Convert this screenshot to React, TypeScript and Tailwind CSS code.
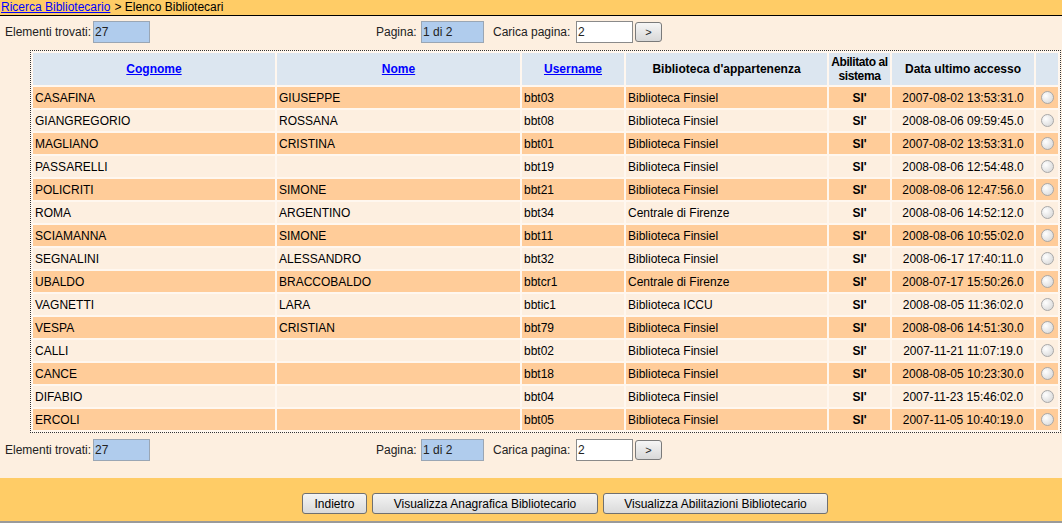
import React from "react";

type Row = [string, string, string, string, string];

const rows: Row[] = [
  ["CASAFINA", "GIUSEPPE", "bbt03", "Biblioteca Finsiel", "2007-08-02 13:53:31.0"],
  ["GIANGREGORIO", "ROSSANA", "bbt08", "Biblioteca Finsiel", "2008-08-06 09:59:45.0"],
  ["MAGLIANO", "CRISTINA", "bbt01", "Biblioteca Finsiel", "2007-08-02 13:53:31.0"],
  ["PASSARELLI", "", "bbt19", "Biblioteca Finsiel", "2008-08-06 12:54:48.0"],
  ["POLICRITI", "SIMONE", "bbt21", "Biblioteca Finsiel", "2008-08-06 12:47:56.0"],
  ["ROMA", "ARGENTINO", "bbt34", "Centrale di Firenze", "2008-08-06 14:52:12.0"],
  ["SCIAMANNA", "SIMONE", "bbt11", "Biblioteca Finsiel", "2008-08-06 10:55:02.0"],
  ["SEGNALINI", "ALESSANDRO", "bbt32", "Biblioteca Finsiel", "2008-06-17 17:40:11.0"],
  ["UBALDO", "BRACCOBALDO", "bbtcr1", "Centrale di Firenze", "2008-07-17 15:50:26.0"],
  ["VAGNETTI", "LARA", "bbtic1", "Biblioteca ICCU", "2008-08-05 11:36:02.0"],
  ["VESPA", "CRISTIAN", "bbt79", "Biblioteca Finsiel", "2008-08-06 14:51:30.0"],
  ["CALLI", "", "bbt02", "Biblioteca Finsiel", "2007-11-21 11:07:19.0"],
  ["CANCE", "", "bbt18", "Biblioteca Finsiel", "2008-08-05 10:23:30.0"],
  ["DIFABIO", "", "bbt04", "Biblioteca Finsiel", "2007-11-23 15:46:02.0"],
  ["ERCOLI", "", "bbt05", "Biblioteca Finsiel", "2007-11-05 10:40:19.0"],
];

function Pager() {
  return (
    <div className="flex h-[22px] items-center text-[12px] text-[#222]">
      <span className="ml-[5px] w-[88px] whitespace-nowrap">Elementi trovati:</span>
      <span className="flex h-[22px] w-[57px] items-center border border-[#9aa6b4] bg-[#b0cced] pl-[1px] text-[12px] text-[#222]">
        27
      </span>
      <span className="w-[226px]" />
      <span className="w-[45px] whitespace-nowrap">Pagina:</span>
      <span className="flex h-[22px] w-[63px] items-center border border-[#9aa6b4] bg-[#b0cced] pl-[1px]">
        1 di 2
      </span>
      <span className="ml-[9px] w-[83px] whitespace-nowrap">Carica pagina:</span>
      <span className="flex h-[22px] w-[57px] items-center border border-[#8a8a8a] bg-white pl-[1px]">
        2
      </span>
      <span className="ml-[2px] flex h-[20px] w-[27px] items-center justify-center rounded-[3px] border border-[#7a7a7a] bg-linear-to-b from-[#f6f6f6] to-[#d8d8d8] text-[11px] text-[#222]">
        &gt;
      </span>
    </div>
  );
}

function Radio() {
  return (
    <span className="mx-auto block h-[13px] w-[13px] rounded-full border border-[#a8a8a8] bg-[radial-gradient(circle_at_35%_35%,#ffffff,#d2d2d2)]" />
  );
}

export default function App() {
  return (
    <div
      className="flex h-[523px] w-[1062px] flex-col overflow-hidden bg-[#fdefe0] text-black"
      style={{ fontFamily: '"Liberation Sans", Arial, sans-serif' }}
    >
      <div className="flex h-[15px] items-center bg-[#ffcc66] pl-[1px] text-[12px] leading-[15px]">
        <a className="text-[#0000ff] underline">Ricerca Bibliotecario</a>
        <span className="ml-[4px]">&gt; Elenco Bibliotecari</span>
      </div>
      <div className="h-[2px] bg-black" />

      <div className="mt-[5px]">
        <Pager />
      </div>

      <div className="ml-[30px] mt-[7px]">
        <table className="w-[1031px] table-fixed border-separate border-spacing-[2px] border border-dotted border-[#333] bg-[#fff7ef] text-[12px]">
          <colgroup>
            <col className="w-[242px]" />
            <col className="w-[243px]" />
            <col className="w-[102px]" />
            <col className="w-[201px]" />
            <col className="w-[61px]" />
            <col className="w-[142px]" />
            <col className="w-[22px]" />
          </colgroup>
          <thead>
            <tr className="h-[32px] bg-[#dce6f0] font-bold leading-[14px]">
              <th className="p-0 text-center">
                <a className="text-[#0000ff] underline">Cognome</a>
              </th>
              <th className="p-0 text-center">
                <a className="text-[#0000ff] underline">Nome</a>
              </th>
              <th className="p-0 text-center">
                <a className="text-[#0000ff] underline">Username</a>
              </th>
              <th className="p-0 text-center">Biblioteca d'appartenenza</th>
              <th className="overflow-visible whitespace-nowrap p-0 text-center tracking-[-0.4px]">
                Abilitato al
                <br />
                sistema
              </th>
              <th className="p-0 text-center">Data ultimo accesso</th>
              <th className="p-0" />
            </tr>
          </thead>
          <tbody>
            {rows.map((r, i) => (
              <tr
                key={i}
                className={`h-[21px] leading-[14px] ${i % 2 === 0 ? "bg-[#ffcc99]" : "bg-[#fdefe0]"}`}
              >
                <td className="overflow-hidden whitespace-nowrap px-[2px] py-0">{r[0]}</td>
                <td className="overflow-hidden whitespace-nowrap px-[2px] py-0">{r[1]}</td>
                <td className="overflow-hidden whitespace-nowrap px-[2px] py-0">{r[2]}</td>
                <td className="overflow-hidden whitespace-nowrap px-[2px] py-0">{r[3]}</td>
                <td className="p-0 text-center font-bold">SI'</td>
                <td className="whitespace-nowrap p-0 text-center">{r[4]}</td>
                <td className="p-0">
                  <Radio />
                </td>
              </tr>
            ))}
          </tbody>
        </table>
      </div>

      <div className="mt-[6px]">
        <Pager />
      </div>

      <div className="mt-[17px] flex h-[43px] shrink-0 items-start bg-[#ffcc66] pl-[302px] pt-[15px]">
        <div className="flex gap-[5px] text-[12px]">
          <button className="h-[21px] w-[65px] rounded-[3px] border border-[#707070] bg-linear-to-b from-[#f4f4f4] to-[#dadada] p-0 text-[12px] text-black">
            Indietro
          </button>
          <button className="h-[21px] w-[226px] rounded-[3px] border border-[#707070] bg-linear-to-b from-[#f4f4f4] to-[#dadada] p-0 text-[12px] text-black">
            Visualizza Anagrafica Bibliotecario
          </button>
          <button className="h-[21px] w-[225px] rounded-[3px] border border-[#707070] bg-linear-to-b from-[#f4f4f4] to-[#dadada] p-0 text-[12px] text-black">
            Visualizza Abilitazioni Bibliotecario
          </button>
        </div>
      </div>
      <div className="h-[2px] shrink-0 bg-[#9a9a9a]" />
    </div>
  );
}
